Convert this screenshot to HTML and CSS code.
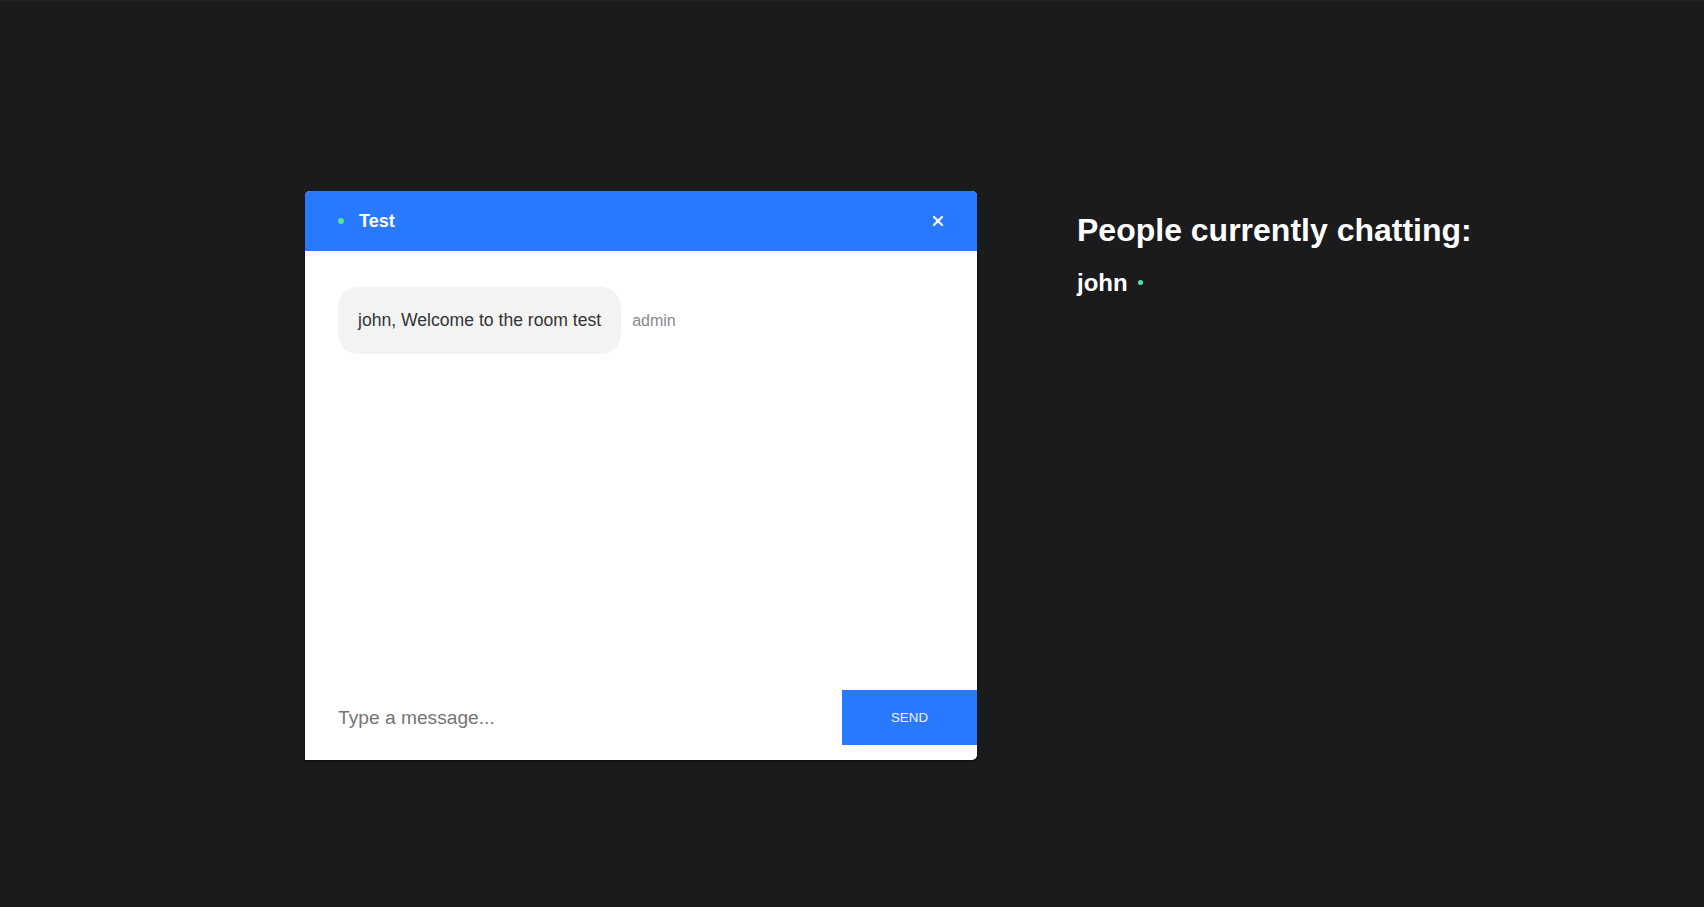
FILE: index.html
```html
<!DOCTYPE html>
<html lang="en">
<head>
<meta charset="utf-8">
<title>Chat</title>
<link rel="stylesheet" href="styles.css">
</head>
<body>
<div class="page">
  <section class="chat">
    <header class="chat-header">
      <span class="status-dot"></span>
      <span class="room-title">Test</span>
      <button class="close-btn" aria-label="Close">
        <svg width="10" height="10" viewBox="0 0 10 10"><path d="M1 1L9 9M9 1L1 9" stroke="#fff" stroke-width="2.2" stroke-linecap="square"/></svg>
      </button>
    </header>
    <div class="messages">
      <div class="message">
        <div class="bubble">john, Welcome to the room test</div>
        <span class="sender">admin</span>
      </div>
    </div>
    <form class="composer">
      <input class="composer-input" type="text" placeholder="Type a message...">
      <button class="send-btn" type="button">SEND</button>
    </form>
  </section>
  <aside class="people">
    <h1 class="people-title">People currently chatting:</h1>
    <h2 class="person">john<span class="online-dot"></span></h2>
  </aside>
</div>
</body>
</html>
```
FILE: styles.css
```css
html, body {
  margin: 0;
  padding: 0;
  height: 100%;
}
body {
  background: #1b1b1d;
  font-family: "Liberation Sans", Arial, sans-serif;
  overflow: hidden;
  border-top: 1px solid #232325;
  box-sizing: border-box;
}
.page {
  display: flex;
  align-items: flex-start;
  gap: 100px;
  padding: 190px 0 0 305px;
}
.chat {
  width: 672px;
  height: 569px;
  background: #fff;
  border-radius: 5px 5px 5px 0;
  display: flex;
  flex-direction: column;
  box-shadow: 0 1px 2px rgba(0, 0, 0, 0.6);
  flex-shrink: 0;
}
.chat-header {
  height: 60px;
  background: #2979ff;
  border-radius: 5px 5px 0 0;
  display: flex;
  align-items: center;
  padding: 0 34px 0 33px;
  color: #fff;
}
.status-dot {
  width: 6px;
  height: 6px;
  border-radius: 50%;
  background: #50e3a4;
  margin-right: 15px;
}
.room-title {
  font-size: 18px;
  font-weight: bold;
}
.close-btn {
  margin-left: auto;
  background: none;
  border: none;
  padding: 0;
  width: 10px;
  height: 10px;
  display: flex;
  cursor: pointer;
}
.messages {
  flex: 1;
  padding: 36px 33px 0;
}
.message {
  display: flex;
  align-items: center;
  gap: 11px;
}
.bubble {
  background: #f3f3f3;
  border-radius: 20px;
  padding: 23px 20px;
  font-size: 17.6px;
  color: #333;
}
.sender {
  font-size: 16px;
  color: #888;
}
.composer {
  display: flex;
  height: 55px;
  margin: 0 0 15px;
}
.composer-input {
  flex: 1;
  border: none;
  outline: none;
  background: transparent;
  padding: 0 33px;
  font-family: "Liberation Sans", Arial, sans-serif;
  font-size: 19.2px;
  color: #333;
}
.composer-input::placeholder {
  color: #757575;
}
.send-btn {
  width: 135px;
  border: none;
  background: #2979ff;
  color: #f2f2f2;
  font-family: "Liberation Sans", Arial, sans-serif;
  font-size: 13.33px;
  cursor: pointer;
}
.people {
  color: #fff;
}
.people-title {
  font-size: 32px;
  font-weight: bold;
  margin: 21.44px 0 19.5px;
  white-space: nowrap;
}
.person {
  font-size: 24px;
  font-weight: bold;
  margin: 0;
}
.online-dot {
  display: inline-block;
  width: 5px;
  height: 5px;
  border-radius: 50%;
  background: #50e3a4;
  margin-left: 10px;
  vertical-align: middle;
  position: relative;
  top: -2px;
}
```
